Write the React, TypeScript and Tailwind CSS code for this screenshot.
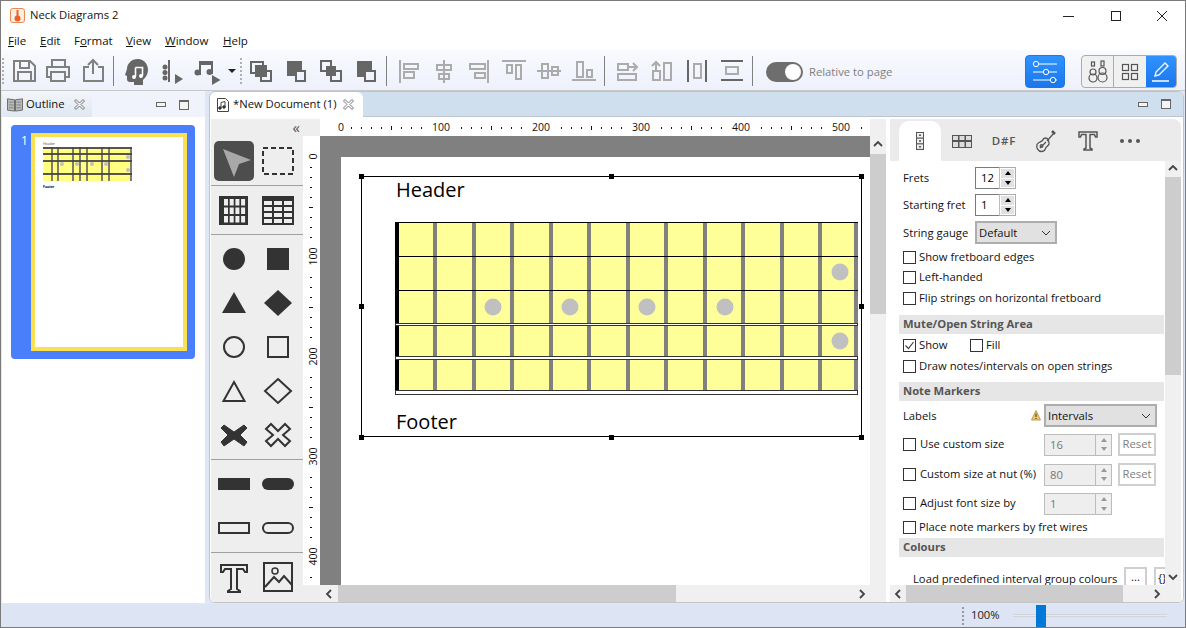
import React from "react";

const D = "#333333";
const G = "#808080";
const L = "#ababab";

function Ic({ a, b, children }: { a: number; b: number; children?: React.ReactNode }) {
  return (
    <svg width={b - a} height={40} viewBox={`${a} 50 ${b - a} 40`} className="shrink-0 block">
      {children}
    </svg>
  );
}

function Grip({ x }: { x: number }) {
  const ys = [58, 62, 66, 70, 74, 78, 82];
  return (
    <>
      {ys.map((y) => (
        <rect key={y} x={x} y={y} width={2} height={2} fill="#b0b0b0" />
      ))}
    </>
  );
}

function Toolbar() {
  const s2 = { fill: "none", strokeWidth: 2 };
  return (
    <div className="h-[41px] flex items-start bg-gradient-to-b from-[#f8fafe] to-[#eef1fb] border-b border-[#c8c8c8] shrink-0">
      <Ic a={1} b={113}>
        <Grip x={2} />
        <g {...s2} stroke={G}>
          <path d="M14 61h16l5 5v15h-21z" />
          <path d="M20 61v7h9v-7" />
          <path d="M18 81v-9h13v9" />
          <path d="M52 67v-7h13v7M51 77h-4v-10h22v10h-4" />
          <rect x="51" y="72" width="14" height="9" />
          <path d="M89 67h-5v14h19v-14h-5M93 74v-14M88 65l5-5 5 5" />
        </g>
      </Ic>
      <Ic a={113} b={245}>
        <rect x="113" y="56" width="1" height="30" fill={G} />
        <path d="M138 59c-7 0-11 5-11 10l-2 6 2 1v3c0 2 1 3 3 3h4v3h9v-5c3-3 5-6 5-10 0-6-4-11-10-11z" fill="#666" />
        <path d="M135.500 67.500h7v8M135.500 67.500v9" stroke="#fff" strokeWidth="1.600" fill="none" />
        <circle cx="134" cy="77" r="2" fill="#fff" />
        <circle cx="141" cy="76" r="2" fill="#fff" />
        <rect x="168" y="60" width="2" height="22" fill="#666" />
        <circle cx="165" cy="67" r="2.500" fill="#666" />
        <circle cx="165" cy="72.500" r="2.500" fill="#666" />
        <circle cx="165" cy="78" r="2.500" fill="#666" />
        <path d="M175 74l8 5-8 5z" fill="#666" />
        <path d="M199 61h14v13h-2v-9h-10v10h-2z" fill="#666" />
        <rect x="199" y="61" width="14" height="3" fill="#666" />
        <circle cx="197.500" cy="72.500" r="3" fill="#666" />
        <circle cx="209.500" cy="72" r="3" fill="#666" />
        <path d="M212 75l8.500 5-8.500 5z" fill="#666" />
        <path d="M228 69h8l-4 4z" fill="#222" />
        <Grip x={240} />
      </Ic>
      <Ic a={245} b={386}>
        <g fill="none" stroke="#666" strokeWidth="2">
          <rect x="251" y="62" width="12" height="11" />
          <rect x="261" y="71" width="10" height="10" />
          <rect x="296" y="71" width="9" height="10" />
          <rect x="321" y="61" width="10" height="10" />
          <rect x="331" y="71" width="10" height="10" />
          <rect x="365" y="71" width="10" height="10" />
        </g>
        <rect x="255" y="65" width="12" height="12" fill="#666" />
        <path d="M287 61h15v9h-7v6h-8z" fill="#666" />
        <rect x="326" y="66" width="10" height="10" fill="#666" />
        <path d="M357 61h15v9h-8v7h-7z" fill="#666" />
      </Ic>
      <Ic a={386} b={604}>
        <rect x="386" y="56" width="1" height="30" fill={G} />
        <g fill="none" stroke={L} strokeWidth="2">
          <path d="M400 60v23" />
          <rect x="404" y="64" width="14" height="5" />
          <rect x="404" y="72" width="10" height="6" />
          <path d="M444 60v23" />
          <rect x="437" y="65" width="14" height="5" />
          <rect x="439" y="74" width="10" height="5" />
          <path d="M488 60v23" />
          <rect x="470" y="64" width="15" height="5" />
          <rect x="475" y="73" width="10" height="5" />
          <path d="M502 61h24" />
          <rect x="507" y="65" width="5" height="8" />
          <rect x="516" y="65" width="5" height="14" />
          <path d="M537 71h24" />
          <rect x="542" y="64" width="6" height="14" />
          <rect x="552" y="67" width="6" height="8" />
          <path d="M572 80h24" />
          <rect x="577" y="62" width="6" height="15" />
          <rect x="587" y="70" width="5" height="7" />
        </g>
      </Ic>
      <Ic a={604} b={752}>
        <rect x="604" y="56" width="1" height="30" fill={G} />
        <g fill="none" stroke={L} strokeWidth="2">
          <rect x="618" y="64" width="10" height="6" />
          <rect x="618" y="74" width="18" height="6" />
          <path d="M628 67h8M633 63l4 4-4 4" />
          <rect x="653" y="71" width="7" height="9" />
          <rect x="664" y="63" width="7" height="17" />
          <path d="M656 70v-8M652 66l4-4 4 4" />
        </g>
        <g fill="none" stroke="#666" strokeWidth="2">
          <path d="M688 60v22M706 60v22" />
          <path d="M721 61h22M721 80h22" />
        </g>
        <g fill="none" stroke={L} strokeWidth="2">
          <rect x="694" y="64" width="7" height="14" />
          <rect x="726" y="67" width="12" height="7" />
        </g>
      </Ic>
      <div className="w-px h-[30px] mt-[6px] bg-[#808080] shrink-0" />
      <div className="w-[37px] h-[20px] mt-[12px] ml-[13px] rounded-full bg-[#6e6e6e] flex justify-end items-center pr-[2px] shrink-0">
        <div className="w-[16px] h-[16px] rounded-full bg-white" />
      </div>
      <div className="ml-[6px] mt-[13px] text-[#808080] leading-[18px] w-[216px] shrink-0">Relative to page</div>
      <div className="w-[40px] h-[33px] mt-[5px] rounded-[4px] border border-[#1f78e6] bg-gradient-to-b from-[#2f93ff] to-[#1a76ec] flex items-center justify-center shrink-0">
        <svg width="26" height="24" viewBox="0 0 26 24" fill="none" stroke="#fff" strokeWidth="1">
          <path d="M7 4h18M1 12h10M17 12h8M1 20h17M24 20h1" />
          <circle cx="4" cy="4" r="2.700" />
          <circle cx="14" cy="12" r="2.700" />
          <circle cx="21" cy="20" r="2.700" />
        </svg>
      </div>
      <div className="ml-[16px] mt-[5px] w-[96px] h-[33px] rounded-[4px] border border-[#ababab] flex overflow-hidden bg-[#f0f0f0] shrink-0">
        <div className="w-[32px] border-r border-[#ababab] flex items-center justify-center">
          <svg width="20" height="24" viewBox="0 0 20 24" fill="none" stroke="#555" strokeWidth="1.200">
            <rect x="3.500" y="2" width="3" height="4" />
            <circle cx="5" cy="12" r="3" />
            <circle cx="5" cy="18" r="4" />
            <rect x="13" y="1" width="3" height="5" />
            <circle cx="14.500" cy="11" r="3.500" />
            <circle cx="14.500" cy="17.500" r="4.500" />
          </svg>
        </div>
        <div className="w-[32px] flex items-center justify-center">
          <svg width="18" height="18" viewBox="0 0 18 18" fill="none" stroke="#555" strokeWidth="1.200">
            <rect x="1.500" y="1.500" width="6" height="6" />
            <rect x="10.500" y="1.500" width="6" height="6" />
            <rect x="1.500" y="10.500" width="6" height="6" />
            <rect x="10.500" y="10.500" width="6" height="6" />
          </svg>
        </div>
        <div className="flex-1 bg-gradient-to-b from-[#2f93ff] to-[#1a76ec] flex items-center justify-center">
          <svg width="20" height="22" viewBox="0 0 20 22" fill="none" stroke="#fff" strokeWidth="1.300">
            <path d="M4 15l1-4L14 2l3 3-9 9z" />
            <path d="M1 20h17" />
          </svg>
        </div>
      </div>
    </div>
  );
}

function MinMax() {
  return (
    <div className="flex items-center gap-[13px]">
      <div className="w-[10px] h-[5px] border border-[#666] bg-[#f4f4f4]" />
      <div className="w-[10px] h-[10px] border border-[#666] border-t-2 bg-[#f4f4f4]" />
    </div>
  );
}

function CloseX() {
  return (
    <svg width="11" height="11" viewBox="0 0 11 11" fill="none" stroke="#777" strokeWidth="1">
      <path d="M2 .5L5.500 4 9 .5 10.500 2 7 5.500 10.500 9 9 10.500 5.500 7 2 10.500 .5 9 4 5.500 .5 2z" />
    </svg>
  );
}

function ThumbBoard() {
  const fx = [51, 57, 72, 79, 86, 101, 108, 130];
  const sy = [0, 6, 13, 26];
  return (
    <svg width="89" height="34" viewBox="43 147 89 34" className="block">
      <rect x="43" y="147" width="89" height="34" fill="#ffff80" />
      {fx.map((x) => (
        <rect key={x} x={x} y="147" width="2" height="34" fill="#666" opacity="0.85" />
      ))}
      {sy.map((y) => (
        <rect key={y} x="43" y={147 + y} width="89" height="2" fill="#444" opacity="0.9" />
      ))}
      {[[62, 164], [77, 164], [92, 164], [106, 164], [128, 157], [128, 170]].map(([x, y]) => (
        <circle key={`${x}${y}`} cx={x} cy={y} r="2" fill="#c0c0c0" />
      ))}
    </svg>
  );
}

function LeftPanel() {
  return (
    <div className="w-[203px] ml-px mr-[4px] shrink-0 flex flex-col bg-white">
      <div className="h-[26px] flex bg-[#f0f3fb] shrink-0">
        <div className="w-[90px] rounded-tr-[8px] bg-gradient-to-b from-[#f3f6fa] to-[#dfe7f0] flex items-center pl-[5px] gap-[3px]">
          <svg width="16" height="15" viewBox="0 0 17 15" fill="#bbb" stroke="#666" strokeWidth="1">
            <path d="M.5 1.500l7.500 1v12l-7.500-1zM16.500 1.500l-7.500 1v12l7.500-1z" />
            <path d="M2 5h5M2 8h5M2 11h5M10 5h5M10 8h5M10 11h5" strokeWidth="0.700" />
          </svg>
          <span className="text-[#111] whitespace-nowrap">Outline</span>
          <span className="ml-[6px] flex"><CloseX /></span>
        </div>
        <div className="flex-1 flex justify-end pr-[16px] pt-[1px] items-center"><MinMax /></div>
      </div>
      <div className="ml-[9px] mt-[8px] h-[234px] w-[184px] rounded-[4px] bg-[#4a7ffb] flex pt-[8px] pb-[8px] pl-[10px]">
        <div className="w-[10px] text-white text-[12px] leading-[16px]">1</div>
        <div className="w-[156px] h-[218px] border-[4px] border-[#fbe151] bg-white pl-[8px] pt-[3px]">
          <div className="text-[3.5px] leading-[7px] text-[#444]">Header</div>
          <ThumbBoard />
          <div className="text-[3.5px] leading-[6px] mt-[3px] font-bold text-black">Footer</div>
        </div>
      </div>
    </div>
  );
}

function Palette() {
  return (
    <svg width="92" height="483" viewBox="211 119 92 483" className="block">
      <rect x="214" y="141" width="40" height="40" rx="5" fill="#4d4d4d" />
      <path d="M223 149l28 11-12 4-5 13z" fill="#a8a8a8" />
      <rect x="263" y="148" width="30" height="26" fill="none" stroke={D} strokeWidth="2" strokeDasharray="5 3" />
      <rect x="211" y="185" width="92" height="1" fill="#a0a0a0" />
      <rect x="219" y="196" width="29" height="29" fill={D} />
      {[0, 1, 2].map((r) =>
        [0, 1, 2, 3].map((c) => (
          <rect key={`a${r}${c}`} x={224 + c * 5.700} y={199 + r * 8.500} width="4" height="6.500" fill="#eee" />
        )),
      )}
      <rect x="262" y="196" width="32" height="29" fill={D} />
      {[0, 1, 2, 3].map((r) =>
        [0, 1, 2].map((c) => (
          <rect key={`b${r}${c}`} x={264 + c * 10} y={201 + r * 6} width="8" height="4" fill="#eee" />
        )),
      )}
      <rect x="211" y="234" width="92" height="1" fill="#a0a0a0" />
      <circle cx="234" cy="259" r="11" fill={D} />
      <rect x="267" y="248" width="22" height="22" fill={D} />
      <path d="M234 292l12 21h-24z" fill={D} />
      <path d="M278 290l14 13-14 13-14-13z" fill={D} />
      <g fill="none" stroke={D} strokeWidth="2">
        <circle cx="234" cy="347" r="10" />
        <rect x="268" y="337" width="20" height="20" />
        <path d="M234 382l10.500 19h-21z" />
        <path d="M278 379l13 12-13 12-13-12z" />
        <path d="M271 424l7 7 7-7 5 5-7 6 7 6-5 5-7-7-7 7-5-5 7-6-7-6z" />
        <rect x="219" y="523" width="30" height="10" />
        <rect x="263" y="523" width="30" height="10" rx="5" />
        <path d="M221 565h26v7h-2l-2-3h-6v20l3 2v1h-12v-1l3-2v-20h-6l-2 3h-2z" />
        <rect x="264" y="563" width="28" height="28" />
        <circle cx="275" cy="571" r="3" strokeWidth="1.500" />
        <path d="M265 587l9-10 5 5 5-6 8 9" />
      </g>
      <path d="M224 425l10 7 10-7 3 3-7 7 7 7-3 4-10-7-10 7-3-4 7-7-7-7z" fill={D} stroke={D} strokeLinejoin="round" />
      <rect x="211" y="459" width="92" height="1" fill="#a0a0a0" />
      <rect x="218" y="478" width="32" height="12" fill={D} />
      <rect x="262" y="478" width="32" height="12" rx="6" fill={D} />
      <rect x="211" y="552" width="92" height="1" fill="#a0a0a0" />
    </svg>
  );
}

function hiddenTick(t: number) {
  const m = t % 100;
  return m === 90 || m === 0 || (m === 10 && t > 100);
}

function HRuler() {
  const ticks: number[] = [];
  for (let i = 1; i <= 52; i++) ticks.push(i * 10);
  return (
    <svg width="550" height="17" viewBox="320 119 550 17" className="block bg-white">
      {ticks.filter((t) => !hiddenTick(t)).map((t) => {
        const long = t % 50 === 0;
        return <rect key={t} x={341 + t} y={long ? 126 : 127} width="1" height={long ? 4 : 2} fill="#111" />;
      })}
      {[0, 100, 200, 300, 400, 500].map((t) => (
        <text key={t} x={341 + t} y="131" textAnchor="middle" fontSize="10.500" fill="#111" fontFamily="Open Sans, sans-serif">
          {t}
        </text>
      ))}
    </svg>
  );
}

function VRuler() {
  const ticks: number[] = [];
  for (let i = 1; i <= 42; i++) ticks.push(i * 10);
  return (
    <svg width="17" height="449" viewBox="303 136 17 449" className="block bg-white">
      {ticks.filter((t) => !hiddenTick(t)).map((t) => {
        const long = t % 50 === 0;
        return <rect key={t} x={long ? 309 : 310} y={157 + t} width={long ? 4 : 2} height="1" fill="#111" />;
      })}
      {[0, 100, 200, 300, 400].map((t) => (
        <text
          key={t}
          transform={`translate(316.500 ${156.500 + t}) rotate(-90)`}
          textAnchor="middle"
          fontSize="10.500"
          fill="#111"
          fontFamily="Open Sans, sans-serif"
        >
          {t}
        </text>
      ))}
    </svg>
  );
}

function Board() {
  const frets = [433, 472, 510, 549, 587, 626, 664, 703, 741, 780, 818, 854];
  const dots = [[493, 307], [570, 307], [647, 307], [725, 307], [840, 272], [840, 341]];
  return (
    <svg width="463" height="173" viewBox="395 222 463 173" className="block">
      <rect x="395" y="222" width="463" height="170" fill="#ffff99" />
      {frets.map((x) => (
        <rect key={x} x={x} y="222" width="4" height="170" fill={G} />
      ))}
      <rect x="395" y="222" width="4" height="170" fill="#000" />
      <rect x="395" y="222" width="463" height="1" fill="#000" />
      <rect x="399" y="256" width="459" height="1" fill="#000" />
      <rect x="399" y="290" width="459" height="1" fill="#000" />
      {[[323, 2], [356, 3], [390, 4]].map(([y, h]) => (
        <rect key={y} x="395.500" y={y + 0.5} width="462" height={h} fill="#fff" stroke={D} strokeWidth="1" />
      ))}
      {dots.map(([x, y]) => (
        <circle key={`${x}${y}`} cx={x} cy={y} r="8.500" fill="#c0c0c0" />
      ))}
    </svg>
  );
}

function Handle({ className }: { className: string }) {
  return <div className={`absolute w-[5px] h-[5px] bg-black ${className}`} />;
}

function Canvas() {
  return (
    <div className="relative flex-1 h-[449px] bg-[#808080] overflow-hidden">
      <div className="absolute left-[21px] top-[21px] w-[529px] h-[428px] bg-white">
        <div className="absolute left-[20px] top-[19px] w-[501px] h-[261px] border border-black" />
        <Handle className="left-[18px] top-[17px]" />
        <Handle className="left-[268px] top-[17px]" />
        <Handle className="left-[518px] top-[17px]" />
        <Handle className="left-[18px] top-[147px]" />
        <Handle className="left-[518px] top-[147px]" />
        <Handle className="left-[18px] top-[278px]" />
        <Handle className="left-[268px] top-[278px]" />
        <Handle className="left-[518px] top-[278px]" />
        <div className="absolute left-[55px] top-[19px] text-[20px] leading-[28px] text-black">Header</div>
        <div className="absolute left-[54px] top-[65px]"><Board /></div>
        <div className="absolute left-[55px] top-[251px] text-[20px] leading-[28px] text-black">Footer</div>
      </div>
    </div>
  );
}

function Arrow({ d }: { d: "l" | "r" | "u" | "d" }) {
  const path = { l: "M6 1L2 5l4 4", r: "M2 1l4 4-4 4", u: "M1 6l4-4 4 4", d: "M1 3l4 4 4-4" }[d];
  return (
    <svg width="10" height="10" viewBox={d === "l" || d === "r" ? "-1 0 10 10" : "0 0 10 10"} fill="none" stroke="#444" strokeWidth="1.800">
      <path d={path} />
    </svg>
  );
}

function Spin({ value, w, disabled }: { value: string; w: string; disabled?: boolean }) {
  return (
    <div className={`flex h-[22px] border shrink-0 ${w} ${disabled ? "border-[#bcbcbc] bg-[#eeeeee] text-[#777]" : "border-[#adadad] bg-white text-black"}`}>
      <div className={`flex-1 pl-[5px] leading-[20px] ${disabled ? "" : "border border-[#7a7a7a] border-r-0 -m-px mr-0"}`}>{value}</div>
      <div className="w-[16px] flex flex-col gap-px p-px border-l border-[#bcbcbc]">
        {[0, 1].map((i) => (
          <div key={i} className={`flex-1 flex items-center justify-center ${disabled ? "bg-[#f0f0f0]" : "bg-[#e1e1e1]"}`}>
            <div className={`w-0 h-0 border-x-[3px] border-x-transparent ${i === 0 ? "border-b-[4px]" : "border-t-[4px]"} ${disabled ? "border-b-[#999] border-t-[#999]" : "border-b-black border-t-black"}`} />
          </div>
        ))}
      </div>
    </div>
  );
}

function Check({ checked }: { checked?: boolean }) {
  return (
    <div className="w-[13px] h-[13px] border border-[#333] bg-white shrink-0 flex items-center justify-center">
      {checked && (
        <svg width="11" height="11" viewBox="0 0 11 11" fill="none" stroke="#444" strokeWidth="1.200">
          <path d="M1.500 5.500l3 3 5-6.500" />
        </svg>
      )}
    </div>
  );
}

function CheckRow({ label, h, className = "" }: { label: string; h: string; className?: string }) {
  return (
    <div className={`flex items-center pl-[4px] gap-[3px] whitespace-nowrap ${h} ${className}`}>
      <Check />
      <span>{label}</span>
    </div>
  );
}

function Section({ label, className = "" }: { label: string; className?: string }) {
  return <div className={`h-[19px] bg-[#e6e6e6] pl-[4px] font-bold text-[#555] leading-[18px] w-[265px] ${className}`}>{label}</div>;
}

function Combo({ label, w }: { label: string; w: string }) {
  return (
    <div className={`h-[23px] border-2 border-[#adadad] bg-[#e1e1e1] flex items-center pl-[2px] pr-[4px] justify-between shrink-0 ${w}`}>
      <span className="pt-px">{label}</span>
      <svg width="10" height="6" viewBox="0 0 10 6" fill="none" stroke="#333"><path d="M1 1l4 4 4-4" /></svg>
    </div>
  );
}

function Reset() {
  return <div className="ml-[6px] w-[38px] h-[23px] border-2 border-[#cfcfcf] text-[#808080] flex items-center justify-center shrink-0">Reset</div>;
}

function RightPanel() {
  return (
    <div className="w-[291px] ml-[4px] flex flex-col shrink-0 bg-white">
      <div className="h-[42px] bg-[#ebebeb] rounded-tr-[8px] flex items-end pl-[9px] shrink-0">
        <div className="w-[42px] h-[40px] bg-white rounded-t-[10px] flex items-center justify-center">
          <svg width="8" height="18" viewBox="0 0 8 18" fill="#555"><rect width="8" height="18" /><rect x="1" y="1" width="6" height="4.500" fill="#eee" /><rect x="1" y="6.700" width="6" height="4.500" fill="#eee" /><rect x="1" y="12.400" width="6" height="4.500" fill="#eee" /><rect x="3" y="2.500" width="2" height="1.500" /><rect x="3" y="8.200" width="2" height="1.500" /><rect x="3" y="14" width="2" height="1.500" /></svg>
        </div>
        <div className="w-[42px] h-[40px] flex items-center justify-center">
          <svg width="20" height="13" viewBox="0 0 20 13" fill="#555"><rect width="20" height="13" /><rect x="1" y="1" width="5" height="4" fill="#ddd" /><rect x="7.500" y="1" width="5" height="4" fill="#ddd" /><rect x="14" y="1" width="5" height="4" fill="#ddd" /><rect x="1" y="7" width="5" height="5" fill="#ddd" /><rect x="7.500" y="7" width="5" height="5" fill="#ddd" /><rect x="14" y="7" width="5" height="5" fill="#ddd" /></svg>
        </div>
        <div className="w-[42px] h-[40px] flex items-center justify-center font-semibold text-[#555] text-[11.5px] tracking-[0.8px]">D#F</div>
        <div className="w-[42px] h-[40px] flex items-center justify-center">
          <svg width="22" height="24" viewBox="0 0 22 24" fill="none" stroke="#555" strokeWidth="1.300">
            <path d="M11 9c-2 0-3 1-3.500 2.500C6 13 3 13 2 15.500c-1 3 1 7 4.500 7 2.500 0 3.500-1.500 4-3 .5-2 3-2.500 3.500-4.500 .3-2-1-6-3-6z" />
            <path d="M12 12l7-8M5 19l6-6" />
            <path d="M17 2l3 3" strokeWidth="2.500" />
            <circle cx="6.500" cy="17" r="1.300" />
          </svg>
        </div>
        <div className="w-[42px] h-[40px] flex items-center justify-center">
          <svg width="20" height="20" viewBox="0 0 20 20" fill="none" stroke="#555" strokeWidth="1.500"><path d="M1 1h18v5h-1.500l-1-2.500H12V17l2 1v1H6v-1l2-1V3.500H3.500l-1 2.500H1z" /></svg>
        </div>
        <div className="w-[42px] h-[40px] flex items-center justify-center gap-[4px]">
          <div className="w-[4px] h-[4px] rounded-full bg-[#555]" />
          <div className="w-[4px] h-[4px] rounded-full bg-[#555]" />
          <div className="w-[4px] h-[4px] rounded-full bg-[#555]" />
        </div>
      </div>
      <div className="flex-1 flex min-h-0">
        <div className="w-[275px] pl-[9px] overflow-hidden text-[#111]">
          <div className="flex items-center mt-[6px] h-[22px]">
            <span className="pl-[4px] w-[76px]">Frets</span>
            <Spin value="12" w="w-[41px]" />
          </div>
          <div className="flex items-center mt-[5px] h-[22px]">
            <span className="pl-[4px] w-[76px]">Starting fret</span>
            <Spin value="1" w="w-[41px]" />
          </div>
          <div className="flex items-center mt-[5px] h-[23px]">
            <span className="pl-[4px] pt-px w-[76px]">String gauge</span>
            <Combo label="Default" w="w-[82px]" />
          </div>
          <CheckRow label="Show fretboard edges" h="h-[20px] mt-[3px]" />
          <CheckRow label="Left-handed" h="h-[21px]" />
          <CheckRow label="Flip strings on horizontal fretboard" h="h-[21px]" />
          <Section label="Mute/Open String Area" className="mt-[6px]" />
          <div className="flex items-center pl-[4px] h-[20px] mt-[1px]">
            <Check checked />
            <span className="ml-[3px] w-[51px]">Show</span>
            <Check />
            <span className="ml-[3px]">Fill</span>
          </div>
          <CheckRow label="Draw notes/intervals on open strings" h="h-[20px] mt-px" />
          <Section label="Note Markers" className="mt-[6px]" />
          <div className="flex items-center h-[23px] mt-[3px]">
            <span className="pl-[4px] pt-px w-[132px]">Labels</span>
            <svg width="10" height="11" viewBox="0 0 10 11" className="shrink-0"><path d="M5 .5L9.500 10H.5z" fill="#f6c65c" stroke="#b8863a" strokeWidth="0.800" /><path d="M5 3.500v3.500M5 8v1" stroke="#333" strokeWidth="1" /></svg>
            <span className="w-[3px]" />
            <Combo label="Intervals" w="w-[113px]" />
          </div>
          <div className="flex items-center h-[23px] mt-[6px] whitespace-nowrap">
            <div className="pl-[4px] -mt-px flex items-center gap-[4px] w-[145px]"><Check /><span>Use custom size</span></div>
            <Spin value="16" w="w-[68px]" disabled />
            <Reset />
          </div>
          <div className="flex items-center h-[23px] mt-[7px] whitespace-nowrap">
            <div className="pl-[4px] -mt-px flex items-center gap-[4px] w-[145px]"><Check /><span>Custom size at nut (%)</span></div>
            <Spin value="80" w="w-[68px]" disabled />
            <Reset />
          </div>
          <div className="flex items-center h-[22px] mt-[7px] whitespace-nowrap">
            <div className="pl-[4px] -mt-px flex items-center gap-[4px] w-[145px]"><Check /><span>Adjust font size by</span></div>
            <Spin value="1" w="w-[68px]" disabled />
          </div>
          <CheckRow label="Place note markers by fret wires" h="h-[20px] mt-[2px]" />
          <Section label="Colours" className="mt-px" />
          <div className="flex items-start h-[23px] mt-[10px] whitespace-nowrap w-[275px]">
            <span className="pl-[14px] w-[225px] pt-[3px] leading-[18px] shrink-0">Load predefined interval group colours</span>
            <div className="w-[23px] h-[23px] border-2 border-[#cfcfcf] text-center leading-[16px] shrink-0">...</div>
            <div className="ml-[7px] w-[20px] h-[23px] border-2 border-[#cfcfcf] pl-[2px] leading-[18px] shrink-0">{"{}"}</div>
          </div>
        </div>
        <div className="w-[16px] bg-[#f0f0f0] flex flex-col items-center shrink-0">
          <div className="h-[16px] flex items-center"><Arrow d="u" /></div>
          <div className="w-full h-[198px] bg-[#cdcdcd]" />
          <div className="flex-1 flex items-end pb-[3px]"><Arrow d="d" /></div>
        </div>
      </div>
      <div className="h-[17px] bg-[#f0f0f0] flex items-center shrink-0">
        <div className="w-[16px] flex justify-center"><Arrow d="l" /></div>
        <div className="h-full w-[217px] bg-[#cdcdcd]" />
        <div className="ml-[26px] w-[16px] flex justify-center"><Arrow d="r" /></div>
      </div>
    </div>
  );
}

function Center() {
  return (
    <div className="w-[675px] flex shrink-0 bg-[#eeeeee]">
      <div className="w-[92px] shrink-0 relative">
        <Palette />
        <div className="absolute right-[3px] top-0 text-[15px] leading-[17px] text-[#555]">«</div>
      </div>
      <div className="flex flex-col w-[567px] shrink-0">
        <div className="flex h-[17px] shrink-0">
          <div className="w-[17px] shrink-0" />
          <HRuler />
        </div>
        <div className="flex h-[449px] shrink-0">
          <VRuler />
          <Canvas />
        </div>
        <div className="flex h-[17px] shrink-0">
          <div className="w-[17px] shrink-0" />
          <div className="flex-1 bg-[#f0f0f0] flex items-center">
            <div className="w-[18px] flex justify-center"><Arrow d="l" /></div>
            <div className="h-full w-[338px] bg-[#cdcdcd]" />
            <div className="ml-[178px] w-[16px] flex justify-center"><Arrow d="r" /></div>
          </div>
        </div>
      </div>
      <div className="w-[16px] bg-[#f0f0f0] shrink-0 flex flex-col items-center pt-[21px]">
        <Arrow d="u" />
        <div className="w-full h-[160px] mt-[4px] bg-[#cdcdcd]" />
      </div>
    </div>
  );
}

export default function App() {
  return (
    <div className="w-[1186px] h-[628px] overflow-hidden flex flex-col bg-white border border-[#7b7b7b] text-[11.25px] text-[#111]" style={{ fontFamily: '"Open Sans", "Noto Sans", sans-serif' }}>
      <div className="h-[29px] flex items-center shrink-0">
        <div className="ml-[9px] w-[15px] h-[15px] rounded-[3px] border border-[#e8894f] bg-[#fdeee4] flex items-center justify-center">
          <svg width="7" height="12" viewBox="0 0 7 12" fill="#e8622a"><rect x="2.500" y="0" width="2" height="7" /><ellipse cx="3.500" cy="8.500" rx="3" ry="3" /></svg>
        </div>
        <span className="ml-[5px] text-[#111]">Neck Diagrams 2</span>
        <div className="flex-1" />
        <svg width="122" height="12" viewBox="0 0 122 12" fill="none" stroke="#222" strokeWidth="1">
          <path d="M0 6.500h11" />
          <rect x="48.500" y="1.500" width="9" height="9" />
          <path d="M94 1l10 10M104 1L94 11" />
        </svg>
      </div>
      <div className="h-[20px] flex items-center pl-[7px] pt-px shrink-0 text-[#111] text-[11.5px]">
        <span className="w-[32px]"><u>F</u>ile</span>
        <span className="w-[34px]"><u>E</u>dit</span>
        <span className="w-[52px]">F<u>o</u>rmat</span>
        <span className="w-[39px]"><u>V</u>iew</span>
        <span className="w-[58px]"><u>W</u>indow</span>
        <span><u>H</u>elp</span>
      </div>
      <Toolbar />
      <div className="flex-1 flex min-h-0 bg-[#dfe6f6]">
        <LeftPanel />
        <div className="w-[975px] h-[512px] shrink-0 flex flex-col bg-white border border-[#c4c4c4] rounded-[6px] overflow-hidden">
          <div className="h-[25px] flex bg-[#cfdfee] border-b border-[#bcc5d0] shrink-0">
            <div className="w-[153px] h-[25px] bg-white rounded-t-[6px] flex items-center pl-[7px] gap-[4px]">
              <svg width="12" height="14" viewBox="0 0 12 14" fill="none" stroke="#444"><path d="M.5.500h8l3 3v10h-11z" /><path d="M4 10V4.500l4-1V9" strokeWidth="1" /><circle cx="3" cy="10" r="1.300" fill="#222" /><circle cx="7" cy="9" r="1.300" fill="#222" /></svg>
              <span className="whitespace-nowrap text-[#111]">*New Document (1)</span>
              <span className="ml-[3px] flex"><CloseX /></span>
            </div>
            <div className="flex-1 flex justify-end items-center pr-[12px]"><MinMax /></div>
          </div>
          <div className="h-[2px] shrink-0" />
          <div className="flex pl-[1px] h-[483px] bg-white">
            <Center />
            <RightPanel />
          </div>
        </div>
      </div>
      <div className="h-[24px] flex items-center bg-[#dde5f5] shrink-0 border-t border-[#dfe6f6] relative">
        <div className="ml-[961px] w-[2px] h-[18px] border-l-2 border-dotted border-[#9a9a9a]" />
        <span className="ml-[7px] w-[42px] text-[#222]">100%</span>
        <div className="w-[154px] h-[3px] bg-[#e6e9ee] border-y border-[#d0d3da] relative">
          <div className="absolute left-[23px] -top-[10px] w-[10px] h-[22px] bg-[#0078d7]" />
        </div>
      </div>
    </div>
  );
}
